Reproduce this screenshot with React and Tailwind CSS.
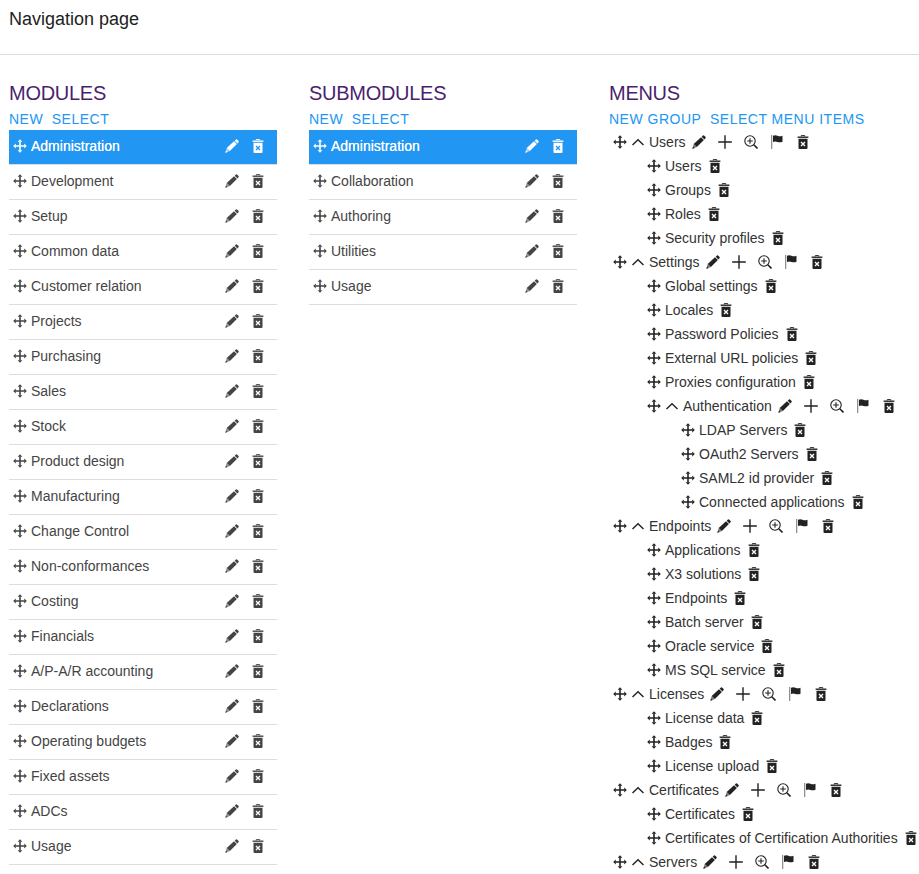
import React from 'react';

function Move() {
  return (
    <svg width="14" height="14" viewBox="0 0 14 14" fill="currentColor" className="block shrink-0">
      <path d="M6.2 2.500h1.600v9H6.200z M2.500 6.200h9v1.600h-9z" />
      <path d="M7 .2l2.400 2.600H4.600z M7 13.800l-2.400-2.600h4.800z M.2 7l2.600-2.400v4.800z M13.800 7l-2.600 2.400V4.600z" />
    </svg>
  );
}

function Pencil() {
  return (
    <svg width="14" height="14" viewBox="0 0 14 14" fill="currentColor" className="block">
      <path d="M1.700 8.900L9 2.200l2.900 2.900-7 7z" />
      <path d="M9.700 1.700L10.900.6q.7-.6 1.400.1l1.100 1.100q.7.7.1 1.400l-1.100 1.300z" />
      <path d="M1.700 8.900l3.200 3.200-4.500 1.600z" opacity=".6" />
      <path d="M.3 13.800l.7-2.300 1.600 1.600z" />
    </svg>
  );
}

function Trash({ cross }) {
  return (
    <svg width="12" height="14" viewBox="0 0 12 14" fill="currentColor" className="block">
      <path d="M4.300 1.500V.5h3.400v1" fill="none" stroke="currentColor" strokeWidth="0.9" />
      <path d="M.6 1.500h10.800v1.400H.6z" />
      <path d="M1.500 3.700h9v9.300q0 1-1 1h-7q-1 0-1-1z" />
      <path d="M4 7l4 4M8 7l-4 4" stroke={cross} strokeWidth="1.300" />
    </svg>
  );
}

function Caret() {
  return (
    <svg width="14" height="14" viewBox="0 0 14 14" fill="none" stroke="currentColor" strokeWidth="1.4" className="block">
      <path d="M1.500 9.900L7 4.700l5.500 5.200" />
    </svg>
  );
}

function Plus() {
  return (
    <svg width="14" height="14" viewBox="0 0 14 14" fill="currentColor" className="block">
      <path d="M6.300 0.200h1.400v13.600H6.300z M0.200 6.300h13.600v1.400H0.200z" />
    </svg>
  );
}

function ZoomIn() {
  return (
    <svg width="14" height="14" viewBox="0 0 14 14" fill="none" stroke="currentColor" className="block">
      <circle cx="6" cy="6" r="5.200" strokeWidth="1.100" />
      <path d="M3.200 6h5.600M6 3.200v5.600" strokeWidth="1.100" />
      <path d="M9.800 9.800l3.700 3.700" strokeWidth="1.600" />
    </svg>
  );
}

function Flag() {
  return (
    <svg width="14" height="14" viewBox="0 0 14 14" fill="currentColor" className="block">
      <path d="M1 0h1.300v14H1z" opacity=".5" />
      <path d="M3 .8q2.200-1 4.500 0 2.300 1 5 0v6q-2.700 1-5 .1-2.300-1-4.500 0z" />
    </svg>
  );
}

function Cell({ children }) {
  return <span className="flex w-[26px] shrink-0 justify-center">{children}</span>;
}

const modules = [
  'Administration', 'Development', 'Setup', 'Common data', 'Customer relation', 'Projects',
  'Purchasing', 'Sales', 'Stock', 'Product design', 'Manufacturing', 'Change Control',
  'Non-conformances', 'Costing', 'Financials', 'A/P-A/R accounting', 'Declarations',
  'Operating budgets', 'Fixed assets', 'ADCs', 'Usage', '',
];

const submodules = ['Administration', 'Collaboration', 'Authoring', 'Utilities', 'Usage'];

const menus = [
  { name: 'Users', items: ['Users', 'Groups', 'Roles', 'Security profiles'] },
  {
    name: 'Settings',
    items: [
      'Global settings', 'Locales', 'Password Policies', 'External URL policies', 'Proxies configuration',
      { name: 'Authentication', items: ['LDAP Servers', 'OAuth2 Servers', 'SAML2 id provider', 'Connected applications'] },
    ],
  },
  { name: 'Endpoints', items: ['Applications', 'X3 solutions', 'Endpoints', 'Batch server', 'Oracle service', 'MS SQL service'] },
  { name: 'Licenses', items: ['License data', 'Badges', 'License upload'] },
  { name: 'Certificates', items: ['Certificates', 'Certificates of Certification Authorities'] },
  { name: 'Servers', items: [] },
];

function Heading({ title, actions }) {
  return (
    <>
      <h2 className="h-[30px] text-[20px] leading-[30px] tracking-[-0.28px] text-[#4b1f6f]">{title}</h2>
      <div className="flex h-[22px] gap-[8.6px] text-sm leading-[22px] tracking-[0.5px] text-[#2196f3]">
        {actions.map((a) => <a key={a}>{a}</a>)}
      </div>
    </>
  );
}

function List({ names }) {
  return (
    <ul>
      {names.map((name, i) => (
        <li
          key={i}
          className={
            'flex h-[35px] items-center border-b border-[#ddd] pr-1.5 pb-0.5 pl-1 ' +
            (i === 0 ? 'bg-[#2196f3] bg-clip-padding text-white [text-shadow:0_0_0.5px_white]' : 'text-[#444]')
          }
        >
          <Move />
          <span className="ml-1 flex-1 leading-[32px]">{name}</span>
          <Cell><Pencil /></Cell>
          <Cell><Trash cross={i === 0 ? '#2196f3' : '#fff'} /></Cell>
        </li>
      ))}
    </ul>
  );
}

function Node({ node }) {
  const group = typeof node !== 'string';
  return (
    <li>
      <div className="flex h-6 items-center pl-1">
        <Move />
        {group && <span className="ml-1"><Caret /></span>}
        <span className="ml-1 text-[#333]">{group ? node.name : node}</span>
        {group && (
          <>
            <Cell><Pencil /></Cell>
            <Cell><Plus /></Cell>
            <Cell><ZoomIn /></Cell>
            <Cell><Flag /></Cell>
          </>
        )}
        <Cell><Trash cross="#fff" /></Cell>
      </div>
      {group && (
        <ul className="pl-[34px]">
          {node.items.map((n, i) => <Node key={i} node={n} />)}
        </ul>
      )}
    </li>
  );
}

export default function App() {
  return (
    <div className="h-[874px] w-[919px] overflow-hidden bg-white font-['Liberation_Sans',Arial,sans-serif] text-sm">
      <header className="h-[55px] border-b border-[#dcdce6] pl-[9px] text-[18px] leading-[38px] text-[#222]">
        Navigation page
      </header>
      <main className="flex gap-8 pt-[23px] pl-[9px] whitespace-nowrap">
        <section className="w-[268px] shrink-0">
          <Heading title="MODULES" actions={['NEW', 'SELECT']} />
          <List names={modules} />
        </section>
        <section className="w-[268px] shrink-0">
          <Heading title="SUBMODULES" actions={['NEW', 'SELECT']} />
          <List names={submodules} />
        </section>
        <section className="w-[310px] shrink-0">
          <Heading title="MENUS" actions={['NEW GROUP', 'SELECT MENU ITEMS']} />
          <ul className="text-[#222]">
            {menus.map((n) => <Node key={n.name} node={n} />)}
          </ul>
        </section>
      </main>
    </div>
  );
}
